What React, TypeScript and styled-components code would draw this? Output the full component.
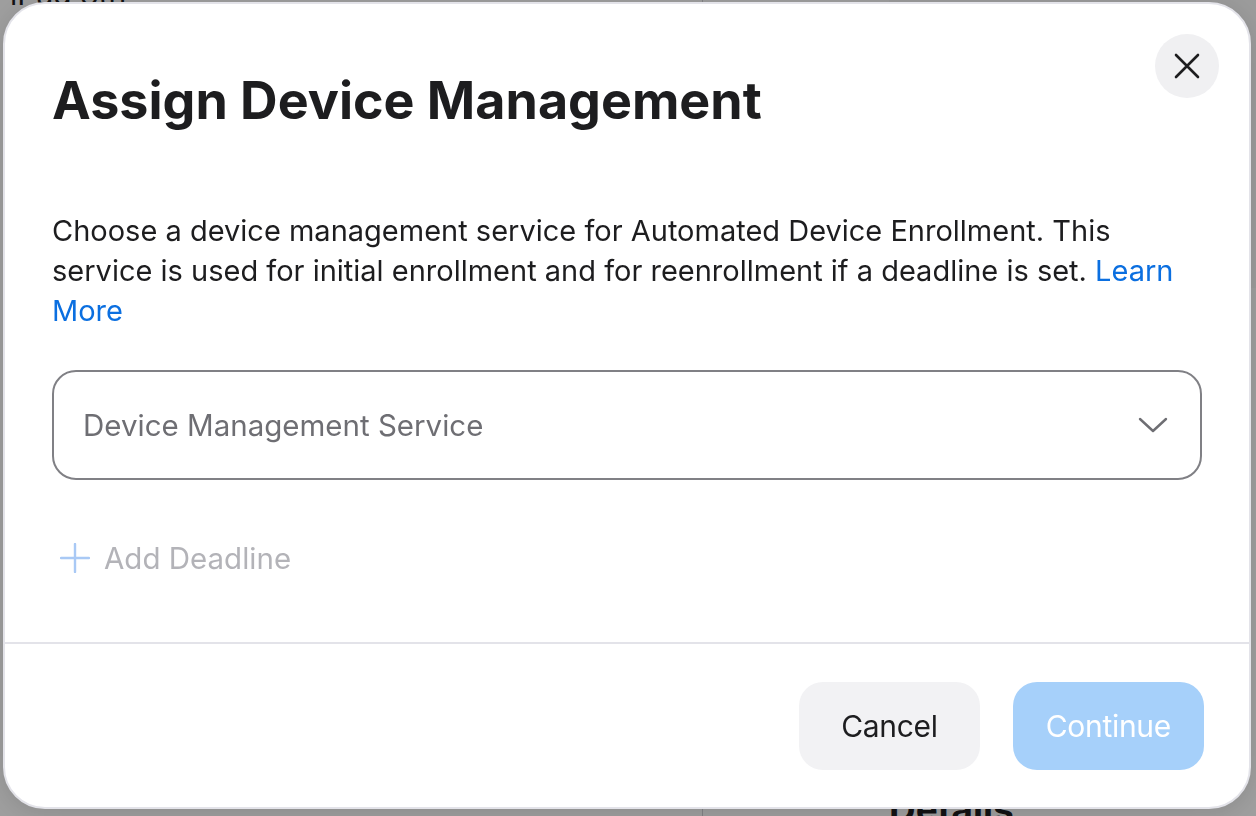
import React from 'react';
import styled, { createGlobalStyle } from 'styled-components';

const GlobalStyle = createGlobalStyle`
  html, body {
    margin: 0;
    padding: 0;
    width: 100%;
    height: 100%;
    overflow: hidden;
  }
  body {
    font-family: Inter, "Liberation Sans", Arial, sans-serif;
    -webkit-font-smoothing: antialiased;
  }
`;

// Page behind the sheet
const Page = styled.div`
  display: grid;
  grid-template-columns: 703px 1fr;
  width: 1256px;
  height: 816px;
  background: #ffffff;
  color: #1d1d1f;
`;

const ListPane = styled.div`
  border-right: 1px solid #d2d2d7;
  padding: 0 10px;
`;

const DeviceTitle = styled.h1`
  margin: -24px 0 0;
  font-size: 30px;
  font-weight: 400;
  line-height: 36px;
`;

const DetailPane = styled.div`
  display: flex;
  flex-direction: column;
  padding: 0 0 0 186px;
`;

const DetailTop = styled.div`
  height: 288px;
  background: #fafafa;
`;

const DetailsHeading = styled.h2`
  margin: 498px 0 0;
  font-size: 37px;
  font-weight: 700;
`;

const Scrim = styled.div`
  position: fixed;
  inset: 0;
  background: rgba(0, 0, 0, 0.38);
`;

const Sheet = styled.div`
  position: fixed;
  left: 3px;
  top: 2px;
  width: 1248px;
  height: 807px;
  box-sizing: border-box;
  display: flex;
  flex-direction: column;
  background: #ffffff;
  border: 2px solid #e3e3e9;
  border-radius: 42px;
  box-shadow: 0 4px 24px rgba(0, 0, 0, 0.12);
`;

const Body = styled.div`
  flex: 1;
  display: flex;
  flex-direction: column;
  padding: 66px 47px 0;
`;

const Title = styled.h2`
  margin: 0;
  font-size: 52px;
  line-height: 62px;
  font-weight: 700;
  color: #1d1d1f;
`;

const CloseButton = styled.button`
  position: absolute;
  top: 30px;
  right: 30px;
  width: 64px;
  height: 64px;
  border: none;
  border-radius: 50%;
  background: #f0f0f2;
  display: flex;
  align-items: center;
  justify-content: center;
  padding: 0;
  cursor: pointer;
`;

const Description = styled.p`
  margin: 79px 0 0;
  font-size: 29px;
  line-height: 40px;
  color: #1d1d1f;
`;

const Link = styled.a`
  color: #0b6fe0;
  text-decoration: none;
`;

const Select = styled.div`
  margin-top: 39px;
  height: 110px;
  box-sizing: border-box;
  border: 2px solid #808085;
  border-radius: 24px;
  display: flex;
  align-items: center;
  justify-content: space-between;
  padding: 0 32px 0 29px;
  cursor: pointer;
`;

const Placeholder = styled.span`
  font-size: 29.5px;
  color: #6e6e73;
`;

const AddRow = styled.div`
  margin-top: 58px;
  display: flex;
  align-items: center;
  gap: 14px;
  height: 40px;
  padding-left: 8px;
  font-size: 29.5px;
  color: #b3b3b8;
`;

const Divider = styled.hr`
  margin: 0;
  border: none;
  border-top: 2px solid #e3e3e9;
`;

const Footer = styled.div`
  display: flex;
  justify-content: flex-end;
  gap: 33px;
  padding: 38px 45px 37px;
`;

const Button = styled.button<{ $primary?: boolean }>`
  height: 88px;
  padding: 0 ${(p) => (p.$primary ? 33 : 42)}px;
  border: none;
  border-radius: 24px;
  font-family: inherit;
  font-size: 30px;
  letter-spacing: -0.3px;
  background: ${(p) => (p.$primary ? '#a6d0fa' : '#f2f2f4')};
  color: ${(p) => (p.$primary ? '#ffffff' : '#1d1d1f')};
  cursor: pointer;
`;

export default function App() {
  return (
    <>
      <GlobalStyle />
      <Page>
        <ListPane>
          <DeviceTitle>iPad 8th</DeviceTitle>
        </ListPane>
        <DetailPane>
          <DetailTop />
          <DetailsHeading>Details</DetailsHeading>
        </DetailPane>
      </Page>
      <Scrim />
      <Sheet role="dialog" aria-labelledby="assign-title">
        <CloseButton aria-label="Close">
          <svg width="26" height="26" viewBox="0 0 26 26" fill="none">
            <path d="M2 2L24 24M24 2L2 24" stroke="#1d1d1f" strokeWidth="2.6" strokeLinecap="round" />
          </svg>
        </CloseButton>
        <Body>
          <Title id="assign-title">Assign Device Management</Title>
          <Description>
            Choose a device management service for Automated Device Enrollment. This service is used
            for initial enrollment and for reenrollment if a deadline is set.{' '}
            <Link href="#">Learn More</Link>
          </Description>
          <Select>
            <Placeholder>Device Management Service</Placeholder>
            <svg width="30" height="16" viewBox="0 0 30 16" fill="none">
              <path d="M2 2L15 14L28 2" stroke="#6e6e73" strokeWidth="2.4" strokeLinecap="round" strokeLinejoin="round" />
            </svg>
          </Select>
          <AddRow>
            <svg width="30" height="30" viewBox="0 0 30 30" fill="none">
              <path d="M15 1V29M1 15H29" stroke="#a9c9f5" strokeWidth="2.4" strokeLinecap="round" />
            </svg>
            <span>Add Deadline</span>
          </AddRow>
        </Body>
        <Divider />
        <Footer>
          <Button>Cancel</Button>
          <Button $primary disabled>
            Continue
          </Button>
        </Footer>
      </Sheet>
    </>
  );
}
